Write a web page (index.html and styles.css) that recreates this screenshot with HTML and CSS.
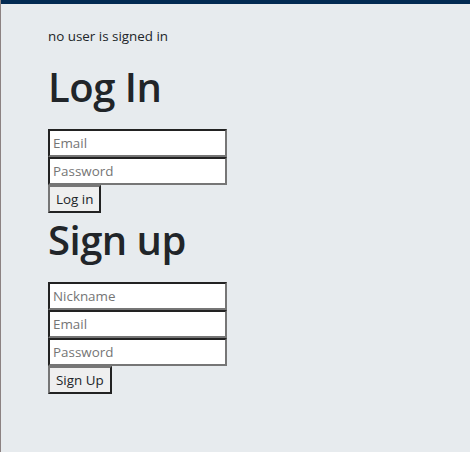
FILE: index.html
```html
<!DOCTYPE html>
<html lang="en">
<head>
<meta charset="utf-8">
<title>Auth</title>
<link rel="stylesheet" href="styles.css">
</head>
<body>
<div class="topbar"></div>
<main class="main">
  <p class="status">no user is signed in</p>
  <section class="auth auth-login">
    <h1 class="title">Log In</h1>
    <form class="form">
      <input class="field" type="email" placeholder="Email">
      <input class="field" type="password" placeholder="Password">
      <button class="btn" type="button">Log in</button>
    </form>
  </section>
  <section class="auth auth-signup">
    <h1 class="title">Sign up</h1>
    <form class="form">
      <input class="field" type="text" placeholder="Nickname">
      <input class="field" type="email" placeholder="Email">
      <input class="field" type="password" placeholder="Password">
      <button class="btn" type="button">Sign Up</button>
    </form>
  </section>
</main>
</body>
</html>
```
FILE: styles.css
```css
html, body {
  margin: 0;
  padding: 0;
}
body {
  background: #e7ebee;
  border-left: 1px solid #8c8282;
  min-height: 452px;
  box-sizing: border-box;
  font-family: "Open Sans", "Noto Sans", sans-serif;
  color: #212529;
}
.topbar {
  height: 4px;
  background: #022a52;
}
.main {
  padding: 0 47px;
}
.status {
  margin: 22px 0 0;
  font-size: 13.4px;
  line-height: 20px;
}
.title {
  margin: 0 0 18px;
  font-size: 40px;
  line-height: 48px;
  font-weight: 600;
  letter-spacing: -0.5px;
}
.auth-login {
  margin-top: 17px;
}
.auth-signup {
  margin-top: 3px;
}
.form {
  display: flex;
  flex-direction: column;
  align-items: flex-start;
}
.field {
  box-sizing: border-box;
  width: 179px;
  height: 28px;
  margin: 0;
  padding: 1px 3px;
  border: 2px solid;
  border-color: #222 #767676 #767676 #222;
  background: #fff;
  font-family: inherit;
  font-size: 13.4px;
  color: #212529;
}
.field::placeholder {
  color: #757575;
}
.btn {
  box-sizing: border-box;
  height: 28px;
  margin: 0;
  padding: 0 6px;
  border: 2px solid;
  border-color: #767676 #222 #222 #767676;
  background: #efefef;
  font-family: inherit;
  font-size: 13.4px;
  color: #212529;
}
```
